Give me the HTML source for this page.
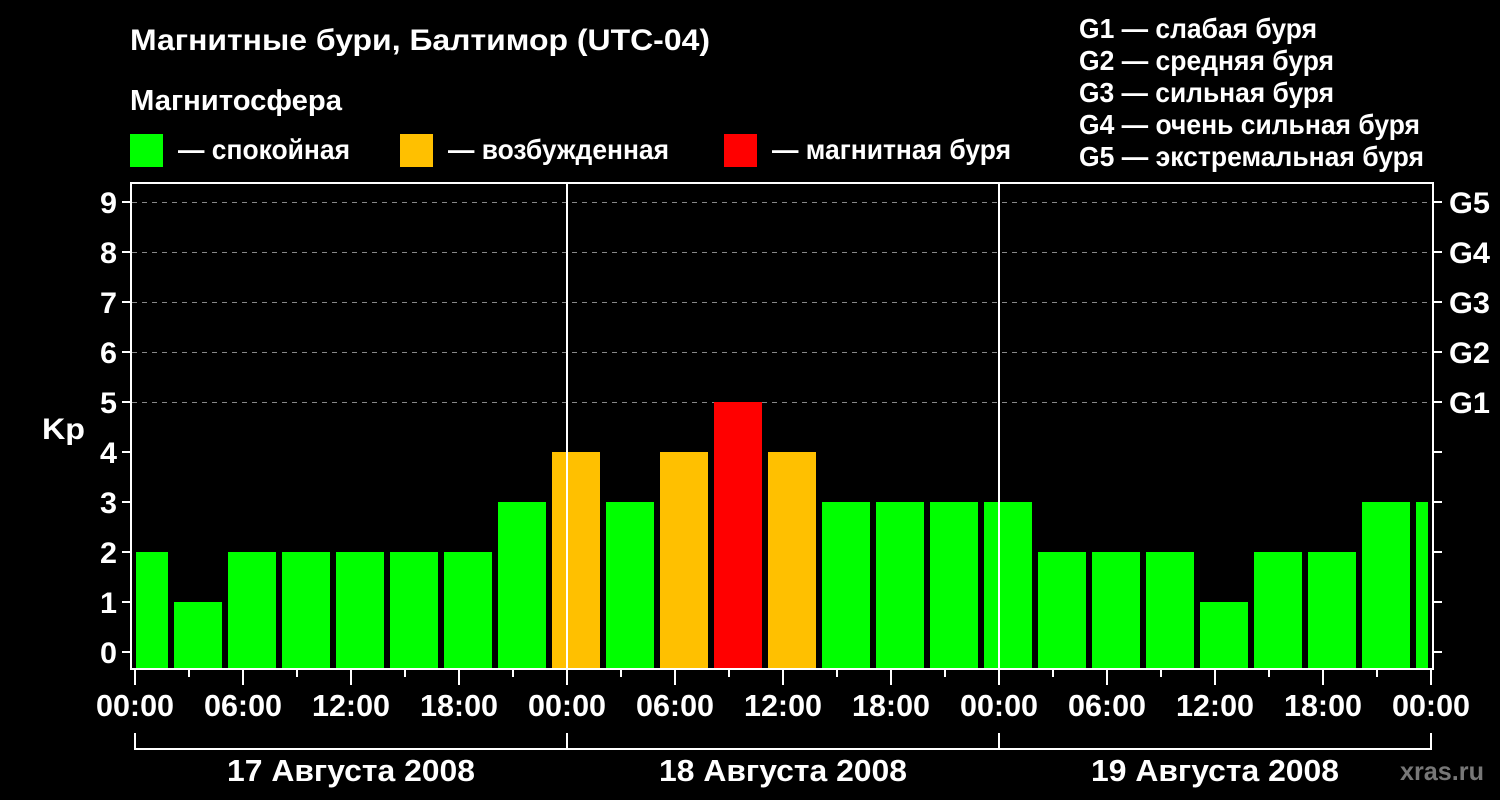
<!DOCTYPE html>
<html><head><meta charset="utf-8"><style>
html,body{margin:0;padding:0;background:#000;}
svg{display:block;font-family:"Liberation Sans",sans-serif;font-weight:bold;}
</style></head><body>
<svg width="1500" height="800" viewBox="0 0 1500 800" xmlns="http://www.w3.org/2000/svg">
<rect width="1500" height="800" fill="#000"/>
<g fill="#fff">
<text x="130" y="50" font-size="30" textLength="580" lengthAdjust="spacingAndGlyphs">Магнитные бури, Балтимор (UTC-04)</text>
<text x="130" y="110" font-size="29" textLength="212" lengthAdjust="spacingAndGlyphs">Магнитосфера</text>
<text x="178" y="159" font-size="28" textLength="172" lengthAdjust="spacingAndGlyphs">— спокойная</text>
<text x="448" y="159" font-size="28" textLength="221" lengthAdjust="spacingAndGlyphs">— возбужденная</text>
<text x="772" y="159" font-size="28" textLength="239" lengthAdjust="spacingAndGlyphs">— магнитная буря</text>
<g font-size="28">
<text x="1079" y="38" textLength="238" lengthAdjust="spacingAndGlyphs">G1 — слабая буря</text>
<text x="1079" y="70" textLength="255" lengthAdjust="spacingAndGlyphs">G2 — средняя буря</text>
<text x="1079" y="102" textLength="255" lengthAdjust="spacingAndGlyphs">G3 — сильная буря</text>
<text x="1079" y="134" textLength="341" lengthAdjust="spacingAndGlyphs">G4 — очень сильная буря</text>
<text x="1079" y="166" textLength="345" lengthAdjust="spacingAndGlyphs">G5 — экстремальная буря</text>
</g>
</g>
<rect x="130" y="134" width="33" height="33" fill="#00ff00"/>
<rect x="400" y="134" width="33" height="33" fill="#ffc000"/>
<rect x="724" y="134" width="33" height="33" fill="#ff0000"/>
<g stroke="#888" stroke-dasharray="5,5" stroke-width="1">
<line x1="132" y1="202.5" x2="1432" y2="202.5"/>
<line x1="132" y1="252.5" x2="1432" y2="252.5"/>
<line x1="132" y1="302.5" x2="1432" y2="302.5"/>
<line x1="132" y1="352.5" x2="1432" y2="352.5"/>
<line x1="132" y1="402.5" x2="1432" y2="402.5"/>
</g>
<g>
<rect x="136" y="552" width="32" height="116" fill="#00ff00"/>
<rect x="174" y="602" width="48" height="66" fill="#00ff00"/>
<rect x="228" y="552" width="48" height="116" fill="#00ff00"/>
<rect x="282" y="552" width="48" height="116" fill="#00ff00"/>
<rect x="336" y="552" width="48" height="116" fill="#00ff00"/>
<rect x="390" y="552" width="48" height="116" fill="#00ff00"/>
<rect x="444" y="552" width="48" height="116" fill="#00ff00"/>
<rect x="498" y="502" width="48" height="166" fill="#00ff00"/>
<rect x="552" y="452" width="48" height="216" fill="#ffc000"/>
<rect x="606" y="502" width="48" height="166" fill="#00ff00"/>
<rect x="660" y="452" width="48" height="216" fill="#ffc000"/>
<rect x="714" y="402" width="48" height="266" fill="#ff0000"/>
<rect x="768" y="452" width="48" height="216" fill="#ffc000"/>
<rect x="822" y="502" width="48" height="166" fill="#00ff00"/>
<rect x="876" y="502" width="48" height="166" fill="#00ff00"/>
<rect x="930" y="502" width="48" height="166" fill="#00ff00"/>
<rect x="984" y="502" width="48" height="166" fill="#00ff00"/>
<rect x="1038" y="552" width="48" height="116" fill="#00ff00"/>
<rect x="1092" y="552" width="48" height="116" fill="#00ff00"/>
<rect x="1146" y="552" width="48" height="116" fill="#00ff00"/>
<rect x="1200" y="602" width="48" height="66" fill="#00ff00"/>
<rect x="1254" y="552" width="48" height="116" fill="#00ff00"/>
<rect x="1308" y="552" width="48" height="116" fill="#00ff00"/>
<rect x="1362" y="502" width="48" height="166" fill="#00ff00"/>
<rect x="1416" y="502" width="12" height="166" fill="#00ff00"/>
</g>
<g stroke="#fff" stroke-width="2" fill="none">
<rect x="131" y="183" width="1302" height="486"/>
<line x1="567" y1="183" x2="567" y2="669"/>
<line x1="999" y1="183" x2="999" y2="669"/>
<path d="M122 652H131M122 602H131M122 552H131M122 502H131M122 452H131M122 402H131M122 352H131M122 302H131M122 252H131M122 202H131"/>
<path d="M1433 652H1442M1433 602H1442M1433 552H1442M1433 502H1442M1433 452H1442M1433 402H1442M1433 352H1442M1433 302H1442M1433 252H1442M1433 202H1442"/>
<path d="M135 670V685M189 670V677M243 670V685M297 670V677M351 670V685M405 670V677M459 670V685M513 670V677M567 670V685M621 670V677M675 670V685M729 670V677M783 670V685M837 670V677M891 670V685M945 670V677M999 670V685M1053 670V677M1107 670V685M1161 670V677M1215 670V685M1269 670V677M1323 670V685M1377 670V677M1431 670V685"/>
<path d="M135 733V749H1431V733M567 733V749M999 733V749"/>
</g>
<g fill="#fff" font-size="30" text-anchor="end">
<text x="117" y="663" textLength="17" lengthAdjust="spacingAndGlyphs">0</text><text x="117" y="613" textLength="17" lengthAdjust="spacingAndGlyphs">1</text><text x="117" y="563" textLength="17" lengthAdjust="spacingAndGlyphs">2</text>
<text x="117" y="513" textLength="17" lengthAdjust="spacingAndGlyphs">3</text><text x="117" y="463" textLength="17" lengthAdjust="spacingAndGlyphs">4</text><text x="117" y="413" textLength="17" lengthAdjust="spacingAndGlyphs">5</text>
<text x="117" y="363" textLength="17" lengthAdjust="spacingAndGlyphs">6</text><text x="117" y="313" textLength="17" lengthAdjust="spacingAndGlyphs">7</text><text x="117" y="263" textLength="17" lengthAdjust="spacingAndGlyphs">8</text>
<text x="117" y="213" textLength="17" lengthAdjust="spacingAndGlyphs">9</text>
</g>
<text x="42" y="439" fill="#fff" font-size="30" textLength="43" lengthAdjust="spacingAndGlyphs">Kp</text>
<g fill="#fff" font-size="30">
<text x="1449" y="413" textLength="41" lengthAdjust="spacingAndGlyphs">G1</text><text x="1449" y="363" textLength="41" lengthAdjust="spacingAndGlyphs">G2</text><text x="1449" y="313" textLength="41" lengthAdjust="spacingAndGlyphs">G3</text>
<text x="1449" y="263" textLength="41" lengthAdjust="spacingAndGlyphs">G4</text><text x="1449" y="213" textLength="41" lengthAdjust="spacingAndGlyphs">G5</text>
</g>
<g fill="#fff" font-size="31" text-anchor="middle">
<text x="135" y="716" textLength="78" lengthAdjust="spacingAndGlyphs">00:00</text><text x="243" y="716" textLength="78" lengthAdjust="spacingAndGlyphs">06:00</text><text x="351" y="716" textLength="78" lengthAdjust="spacingAndGlyphs">12:00</text>
<text x="459" y="716" textLength="78" lengthAdjust="spacingAndGlyphs">18:00</text><text x="567" y="716" textLength="78" lengthAdjust="spacingAndGlyphs">00:00</text><text x="675" y="716" textLength="78" lengthAdjust="spacingAndGlyphs">06:00</text>
<text x="783" y="716" textLength="78" lengthAdjust="spacingAndGlyphs">12:00</text><text x="891" y="716" textLength="78" lengthAdjust="spacingAndGlyphs">18:00</text><text x="999" y="716" textLength="78" lengthAdjust="spacingAndGlyphs">00:00</text>
<text x="1107" y="716" textLength="78" lengthAdjust="spacingAndGlyphs">06:00</text><text x="1215" y="716" textLength="78" lengthAdjust="spacingAndGlyphs">12:00</text><text x="1323" y="716" textLength="78" lengthAdjust="spacingAndGlyphs">18:00</text>
<text x="1431" y="716" textLength="78" lengthAdjust="spacingAndGlyphs">00:00</text>
<text x="351" y="781" textLength="248" lengthAdjust="spacingAndGlyphs">17 Августа 2008</text>
<text x="783" y="781" textLength="248" lengthAdjust="spacingAndGlyphs">18 Августа 2008</text>
<text x="1215" y="781" textLength="248" lengthAdjust="spacingAndGlyphs">19 Августа 2008</text>
</g>
<text x="1484" y="780" fill="#777" font-size="26" text-anchor="end" textLength="84" lengthAdjust="spacingAndGlyphs">xras.ru</text>
</svg>
</body></html>
